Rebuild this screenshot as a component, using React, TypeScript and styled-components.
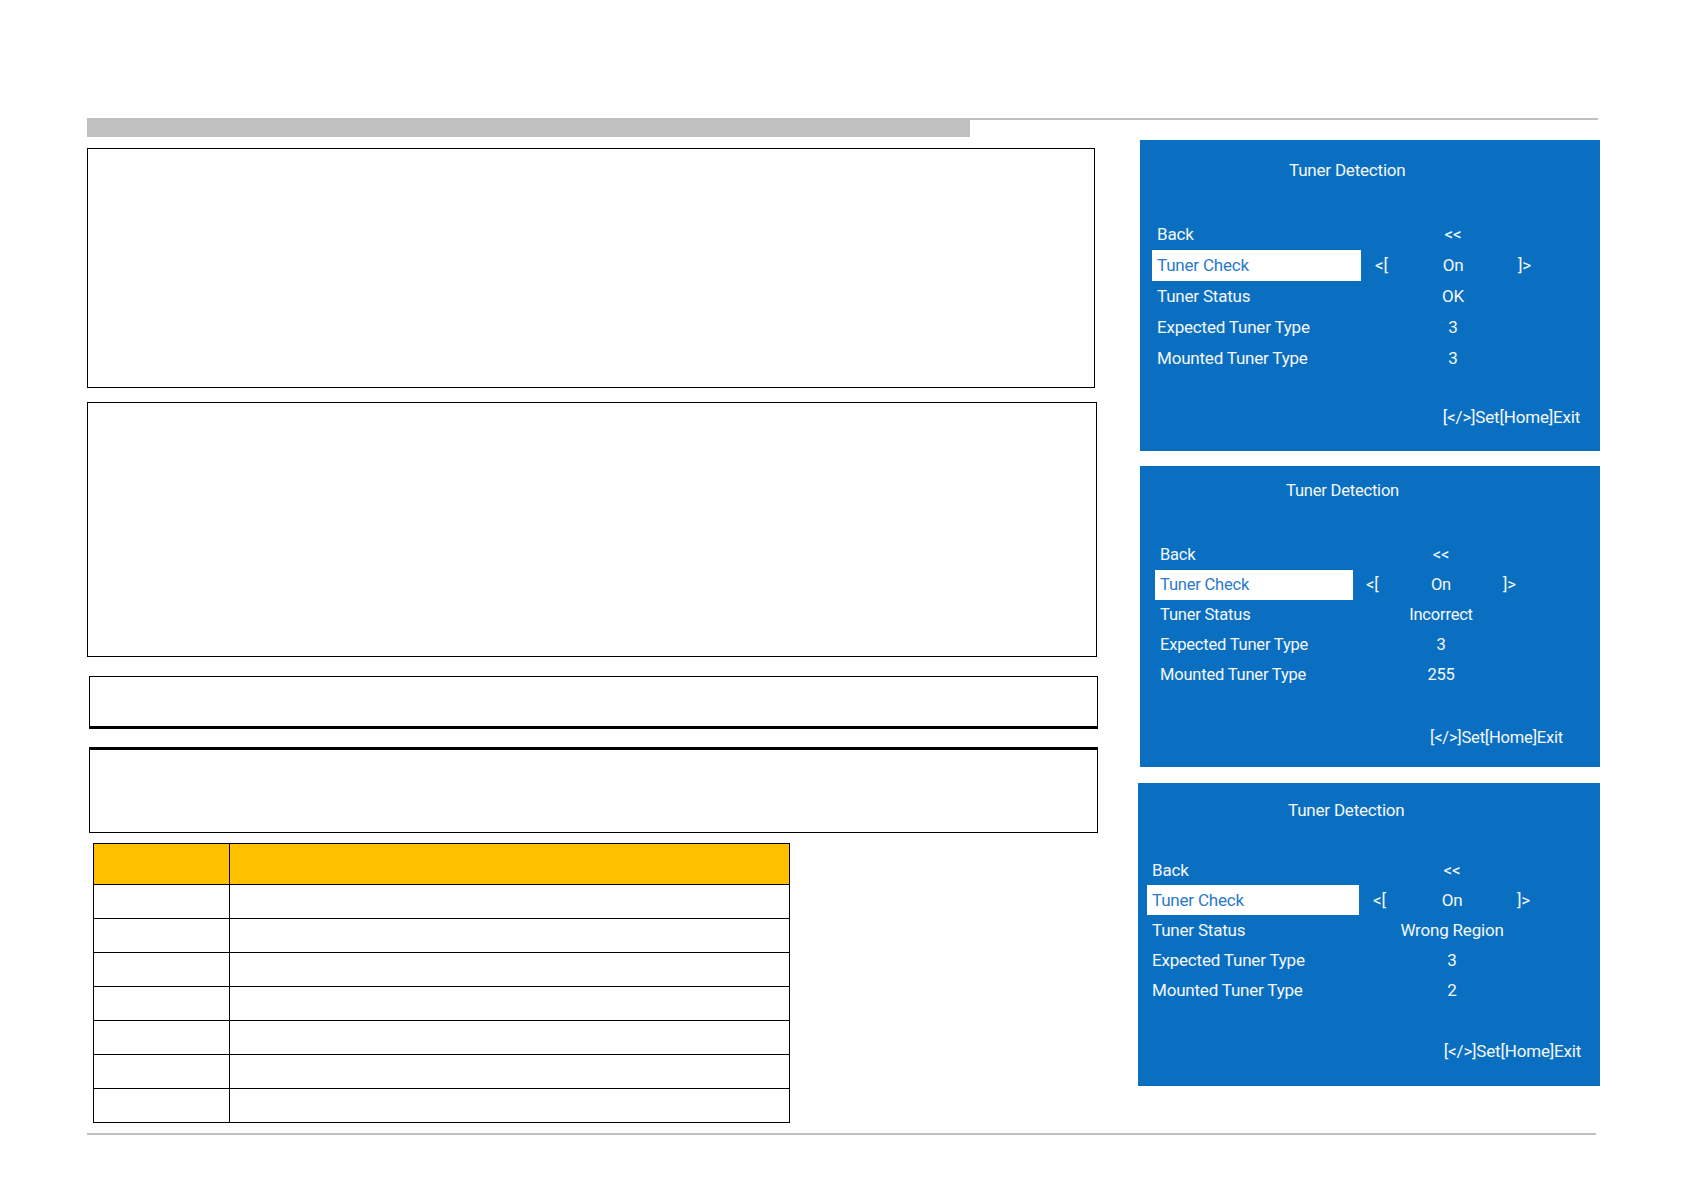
import React from "react";
import styled, { createGlobalStyle } from "styled-components";

const GlobalStyle = createGlobalStyle`
  html, body { margin: 0; padding: 0; background: #ffffff; }
  body { font-family: Roboto, "Liberation Sans", Arial, sans-serif; }
  * { box-sizing: border-box; }
`;

const Page = styled.div`
  width: 1683px;
  height: 1191px;
  padding: 118px 0 0 87px;
  overflow: hidden;
`;

const HeaderRule = styled.div`
  width: 1511px;
  border-top: 2px solid #c0c0c0;
`;

const GrayBar = styled.div`
  width: 883px;
  height: 17px;
  background: #c0c0c0;
`;

const Content = styled.div`
  display: flex;
  align-items: flex-start;
`;

const LeftColumn = styled.div`
  width: 1014px;
  margin-top: 11px;
  display: flex;
  flex-direction: column;
`;

const RightColumn = styled.div`
  width: 462px;
  margin-top: 3px;
  margin-left: 37px;
  display: flex;
  flex-direction: column;
`;

const FrameBox = styled.div<{ $w: number; $h: number; $mt: number; $ml: number; $thickTop?: boolean; $thickBottom?: boolean }>`
  width: ${(p) => p.$w}px;
  height: ${(p) => p.$h}px;
  margin-top: ${(p) => p.$mt}px;
  margin-left: ${(p) => p.$ml}px;
  border: 1.5px solid #000;
  border-top-width: ${(p) => (p.$thickTop ? 3 : 1.5)}px;
  border-bottom-width: ${(p) => (p.$thickBottom ? 3 : 1.5)}px;
  background: #fff;
`;

const Table = styled.table`
  margin-top: 10px;
  margin-left: 6px;
  width: 697px;
  border-collapse: collapse;
  table-layout: fixed;
`;

const HeadCell = styled.th<{ $w?: number }>`
  height: 41px;
  background: #ffc000;
  border: 1.5px solid #000;
  padding: 0;
  ${(p) => (p.$w ? `width: ${p.$w}px;` : "")}
`;

const BodyCell = styled.td`
  height: 34px;
  border: 1.5px solid #000;
  padding: 0;
`;

const FooterRule = styled.div`
  width: 1509px;
  margin-top: 10px;
  border-top: 2px solid #c0c0c0;
`;

type PanelCfg = {
  w: number;
  h: number;
  ml: number;
  mt: number;
  titleX: number;
  titleY: number;
  rowsY: number;
  pitch: number;
  footerY: number;
  footerR: number;
  hlLeft: number;
  hlW: number;
  openX: number;
  vc: number;
  closeX: number;
  fs: number;
  status: string;
  expected: string;
  mounted: string;
};

const Panel = styled.div<{ $w: number; $h: number; $ml: number; $mt: number; $pt: number; $fs: number }>`
  width: ${(p) => p.$w}px;
  height: ${(p) => p.$h}px;
  margin-left: ${(p) => p.$ml}px;
  margin-top: ${(p) => p.$mt}px;
  padding-top: ${(p) => p.$pt}px;
  background: #0b6fc1;
  color: #f4f8fc;
  font-family: Roboto, "Liberation Sans", Arial, sans-serif;
  font-size: ${(p) => p.$fs}px;
  letter-spacing: -0.2px;
  display: flex;
  flex-direction: column;
`;

const PanelTitle = styled.div<{ $x: number }>`
  height: 24px;
  line-height: 24px;
  padding-left: ${(p) => p.$x}px;
  white-space: nowrap;
`;

const Rows = styled.div<{ $mt: number }>`
  margin-top: ${(p) => p.$mt}px;
  display: flex;
  flex-direction: column;
`;

const MenuRow = styled.div<{ $pitch: number; $hlLeft: number; $cols: string }>`
  height: ${(p) => p.$pitch}px;
  line-height: ${(p) => p.$pitch}px;
  padding-left: ${(p) => p.$hlLeft}px;
  display: grid;
  grid-template-columns: ${(p) => p.$cols};
  white-space: nowrap;
`;

const LabelCell = styled.div<{ $active?: boolean }>`
  padding-left: 5px;
  background: ${(p) => (p.$active ? "#ffffff" : "transparent")};
  color: ${(p) => (p.$active ? "#2a7acb" : "inherit")};
`;

const OpenCell = styled.div<{ $pad: number }>`
  padding-left: ${(p) => p.$pad}px;
`;

const ValueCell = styled.div`
  display: flex;
  justify-content: center;
`;

const ValueText = styled.span`
  flex-shrink: 0;
`;

const CloseCell = styled.div<{ $pad: number }>`
  padding-left: ${(p) => p.$pad}px;
`;

const PanelFooter = styled.div<{ $mt: number; $r: number }>`
  margin-top: ${(p) => p.$mt}px;
  height: 24px;
  line-height: 24px;
  padding-right: ${(p) => p.$r}px;
  text-align: right;
  white-space: nowrap;
`;

const panels: PanelCfg[] = [
  { w: 460, h: 311, ml: 2, mt: 0, titleX: 149, titleY: 30, rowsY: 94, pitch: 31, footerY: 277, footerR: 20, hlLeft: 12, hlW: 209, openX: 235, vc: 313, closeX: 378, fs: 17, status: "OK", expected: "3", mounted: "3" },
  { w: 460, h: 301, ml: 2, mt: 15, titleX: 146, titleY: 25, rowsY: 89, pitch: 30, footerY: 272, footerR: 37, hlLeft: 15, hlW: 198, openX: 226, vc: 301, closeX: 363, fs: 16.5, status: "Incorrect", expected: "3", mounted: "255" },
  { w: 462, h: 303, ml: 0, mt: 16, titleX: 150, titleY: 27, rowsY: 87, pitch: 30, footerY: 268, footerR: 19, hlLeft: 9, hlW: 212, openX: 235, vc: 314, closeX: 379, fs: 17, status: "Wrong Region", expected: "3", mounted: "2" },
];

const VAL_HALF = 40;

function TunerPanel({ c }: { c: PanelCfg }) {
  const titleTop = c.titleY - 12;
  const rowsTop = c.rowsY - c.pitch / 2;
  const rowsEnd = rowsTop + c.pitch * 5;
  const openStart = c.hlLeft + c.hlW;
  const openW = c.vc - VAL_HALF - openStart;
  const cols = `${c.hlW}px ${openW}px ${VAL_HALF * 2}px auto`;
  const openPad = c.openX - openStart;
  const closePad = c.closeX - (c.vc + VAL_HALF);

  const rows: { label: string; open?: string; value: string; close?: string; active?: boolean }[] = [
    { label: "Back", value: "<<" },
    { label: "Tuner Check", open: "<[", value: "On", close: "]>", active: true },
    { label: "Tuner Status", value: c.status },
    { label: "Expected Tuner Type", value: c.expected },
    { label: "Mounted Tuner Type", value: c.mounted },
  ];

  return (
    <Panel $w={c.w} $h={c.h} $ml={c.ml} $mt={c.mt} $pt={titleTop} $fs={c.fs}>
      <PanelTitle $x={c.titleX}>Tuner Detection</PanelTitle>
      <Rows $mt={rowsTop - (titleTop + 24)}>
        {rows.map((r) => (
          <MenuRow key={r.label} $pitch={c.pitch} $hlLeft={c.hlLeft} $cols={cols}>
            <LabelCell $active={r.active}>{r.label}</LabelCell>
            <OpenCell $pad={openPad}>{r.open ?? ""}</OpenCell>
            <ValueCell>
              <ValueText>{r.value}</ValueText>
            </ValueCell>
            <CloseCell $pad={closePad}>{r.close ?? ""}</CloseCell>
          </MenuRow>
        ))}
      </Rows>
      <PanelFooter $mt={c.footerY - 12 - rowsEnd} $r={c.footerR}>
        [&lt;/&gt;]Set[Home]Exit
      </PanelFooter>
    </Panel>
  );
}

export default function App() {
  const bodyRows = Array.from({ length: 7 }, (_, i) => i);
  return (
    <>
      <GlobalStyle />
      <Page>
        <HeaderRule>
          <GrayBar />
        </HeaderRule>
        <Content>
          <LeftColumn>
            <FrameBox $w={1008} $h={240} $mt={0} $ml={0} />
            <FrameBox $w={1010} $h={255} $mt={14} $ml={0} />
            <FrameBox $w={1009} $h={53} $mt={19} $ml={2} $thickBottom />
            <FrameBox $w={1009} $h={86} $mt={18} $ml={2} $thickTop />
            <Table>
              <thead>
                <tr>
                  <HeadCell $w={136} />
                  <HeadCell />
                </tr>
              </thead>
              <tbody>
                {bodyRows.map((i) => (
                  <tr key={i}>
                    <BodyCell />
                    <BodyCell />
                  </tr>
                ))}
              </tbody>
            </Table>
          </LeftColumn>
          <RightColumn>
            {panels.map((c, i) => (
              <TunerPanel key={i} c={c} />
            ))}
          </RightColumn>
        </Content>
        <FooterRule />
      </Page>
    </>
  );
}
